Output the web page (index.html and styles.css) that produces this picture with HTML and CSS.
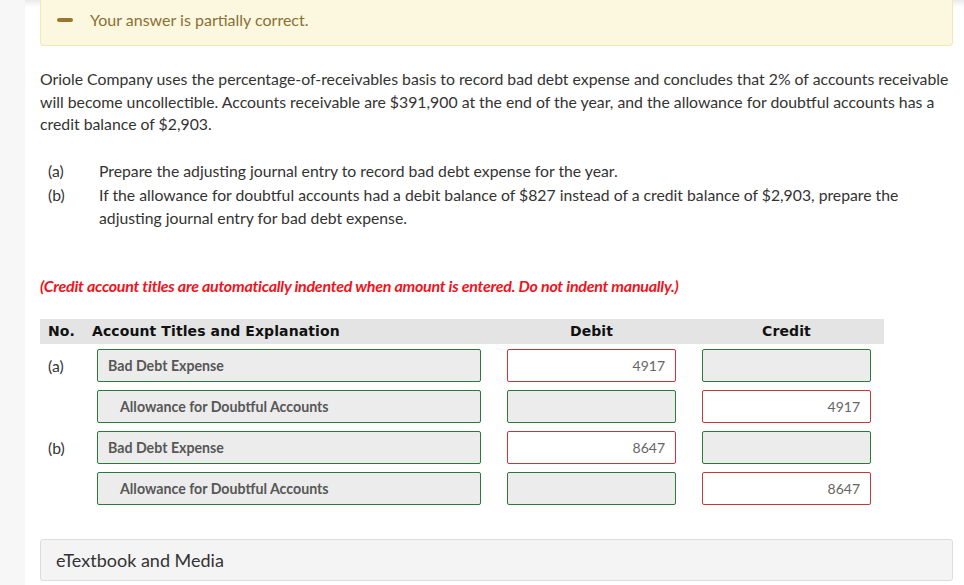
FILE: index.html
```html
<!DOCTYPE html>
<html lang="en">
<head>
<meta charset="utf-8">
<title>Journal entry</title>
<link rel="stylesheet" href="styles.css">
</head>
<body>
<div class="page">
  <div class="rail"></div>
  <main class="main">
    <div class="banner">
      <span class="dash"></span>
      <span class="banner-text">Your answer is partially correct.</span>
    </div>

    <p class="problem">Oriole Company uses the percentage-of-receivables basis to record bad debt expense and concludes that 2% of accounts receivable will become uncollectible. Accounts receivable are $391,900 at the end of the year, and the allowance for doubtful accounts has a credit balance of $2,903.</p>

    <ol class="parts">
      <li><span class="part-label">(a)</span><span class="part-text">Prepare the adjusting journal entry to record bad debt expense for the year.</span></li>
      <li><span class="part-label">(b)</span><span class="part-text">If the allowance for doubtful accounts had a debit balance of $827 instead of a credit balance of $2,903, prepare the adjusting journal entry for bad debt expense.</span></li>
    </ol>

    <p class="note">(Credit account titles are automatically indented when amount is entered. Do not indent manually.)</p>

    <div class="journal">
      <div class="jrow jhead">
        <div class="no">No.</div>
        <div class="acct-h">Account Titles and Explanation</div>
        <div class="debit-h">Debit</div>
        <div class="credit-h">Credit</div>
      </div>

      <div class="jrow">
        <div class="no">(a)</div>
        <div class="field acct ok">Bad Debt Expense</div>
        <div class="field debit bad">4917</div>
        <div class="field credit ok"></div>
      </div>
      <div class="jrow">
        <div class="no"></div>
        <div class="field acct ok indent">Allowance for Doubtful Accounts</div>
        <div class="field debit ok"></div>
        <div class="field credit bad">4917</div>
      </div>
      <div class="jrow">
        <div class="no">(b)</div>
        <div class="field acct ok">Bad Debt Expense</div>
        <div class="field debit bad">8647</div>
        <div class="field credit ok"></div>
      </div>
      <div class="jrow">
        <div class="no"></div>
        <div class="field acct ok indent">Allowance for Doubtful Accounts</div>
        <div class="field debit ok"></div>
        <div class="field credit bad">8647</div>
      </div>
    </div>

    <div class="media">eTextbook and Media</div>
  </main>
</div>
</body>
</html>
```

FILE: styles.css
```css
html, body {
  margin: 0;
  padding: 0;
  background: #ffffff;
}

body {
  font-family: Lato, "Open Sans", sans-serif;
  color: #333333;
  height: 585px;
  overflow: hidden;
  box-shadow: inset 0 6px 6px -4px rgba(0, 0, 0, 0.12);
}

.page {
  display: flex;
  min-height: 585px;
}

.rail {
  width: 25px;
  flex: none;
  background: #f7f7f7;
}

.main {
  flex: 1;
  padding: 0 11px 0 15px;
}

.banner {
  height: 46px;
  box-sizing: border-box;
  background: #fbf8df;
  border: 1px solid #f4e7b4;
  border-top: none;
  border-radius: 0 0 4px 4px;
  display: flex;
  align-items: center;
  padding: 0 0 6px 16px;
}

.dash {
  width: 16px;
  height: 4px;
  border-radius: 2px;
  background: #9a7632;
  margin-right: 17px;
}

.banner-text {
  font-size: 16px;
  color: #8b6f33;
}

.problem {
  margin: 22px 0 0;
  font-size: 15.8px;
  line-height: 22.5px;
}

.parts {
  list-style: none;
  margin: 23px 0 0;
  padding: 0;
  font-size: 15.75px;
}

.parts li {
  display: flex;
  line-height: 23px;
  margin-bottom: 1px;
}

.part-label {
  width: 59px;
  flex: none;
  padding-left: 8px;
  box-sizing: border-box;
}

.part-text {
  flex: 1;
  padding-right: 40px;
}

.note {
  margin: 46px 0 0;
  font-size: 16px;
  font-weight: 700;
  font-style: italic;
  letter-spacing: -0.25px;
  color: #f0131c;
  line-height: 22px;
}

.journal {
  margin-top: 22px;
}

.jrow {
  display: grid;
  grid-template-columns: 57px 384px 26px 169px 26px 169px;
  align-items: center;
  margin-bottom: 8px;
}

.jrow .no {
  grid-column: 1;
  padding-left: 8px;
  font-size: 15.75px;
  color: #333333;
}

.acct-h,
.jrow .acct {
  grid-column: 2;
}

.debit-h,
.jrow .debit {
  grid-column: 4;
}

.credit-h,
.jrow .credit {
  grid-column: 6;
}

.jhead {
  width: 844px;
  box-sizing: border-box;
  padding-right: 13px;
  height: 25px;
  background: #e4e4e4;
  font-family: "DejaVu Sans", Verdana, sans-serif;
  font-weight: 700;
  font-size: 14px;
  letter-spacing: 0.1px;
  color: #111111;
  margin-bottom: 5px;
}

.jhead .no {
  font-size: 14px;
  color: #111111;
}

.acct-h {
  margin-left: -5px;
}

.debit-h,
.credit-h {
  text-align: center;
}

.field {
  height: 33px;
  box-sizing: border-box;
  border-radius: 2px;
  display: flex;
  align-items: center;
  font-size: 14px;
}

.field.ok {
  background: #ececec;
  border: 1px solid #2a7b3a;
}

.field.bad {
  background: #ffffff;
  border: 1px solid #c5373a;
}

.acct {
  padding-left: 10px;
  font-weight: 700;
  color: #575757;
  font-size: 14.2px;
}

.acct.indent {
  padding-left: 22px;
}

.debit,
.credit {
  justify-content: flex-end;
  padding-right: 10px;
  color: #666666;
}

.media {
  margin-top: 34px;
  height: 42px;
  box-sizing: border-box;
  background: #f4f4f4;
  border: 1px solid #dddddd;
  border-radius: 3px;
  display: flex;
  align-items: center;
  padding-left: 15px;
  font-size: 18px;
  color: #333333;
}
```
